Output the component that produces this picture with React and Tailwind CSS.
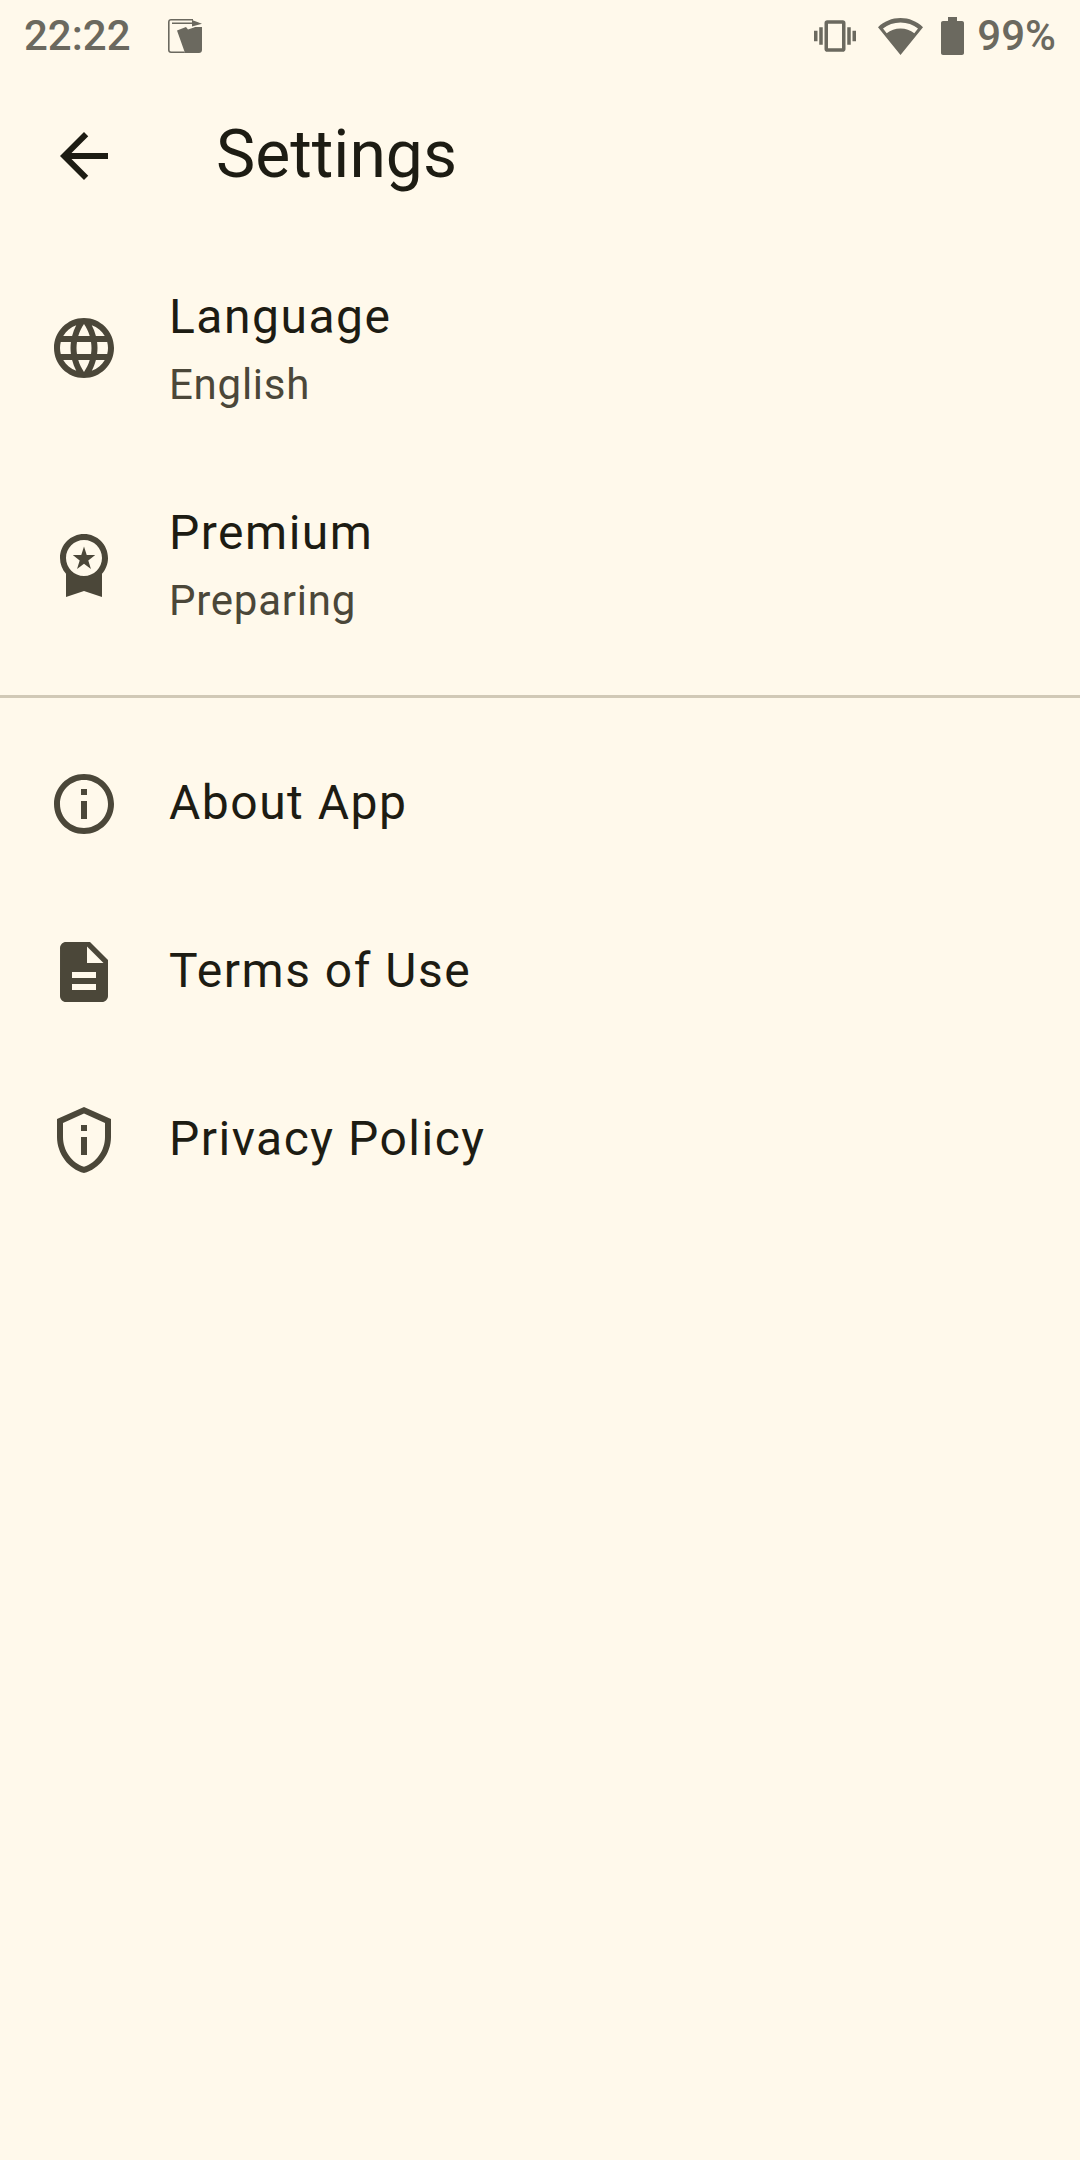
import React from 'react';

const ICONS = {
  language:
    'M11.99 2C6.47 2 2 6.48 2 12s4.47 10 9.99 10C17.52 22 22 17.52 22 12S17.52 2 11.99 2zm6.93 6h-2.95c-.32-1.25-.78-2.45-1.38-3.56 1.84.63 3.37 1.91 4.33 3.56zM12 4.04c.83 1.2 1.48 2.53 1.91 3.96h-3.82c.43-1.43 1.08-2.76 1.91-3.96zM4.26 14C4.1 13.36 4 12.69 4 12s.1-1.36.26-2h3.38c-.08.66-.14 1.32-.14 2 0 .68.06 1.34.14 2H4.26zm.82 2h2.95c.32 1.25.78 2.45 1.38 3.56-1.84-.63-3.37-1.9-4.33-3.56zm2.95-8H5.08c.96-1.66 2.49-2.93 4.33-3.56C8.81 5.55 8.35 6.75 8.03 8zM12 19.96c-.83-1.2-1.48-2.53-1.91-3.96h3.82c-.43 1.43-1.08 2.76-1.91 3.96zM14.34 14H9.66c-.09-.66-.16-1.32-.16-2 0-.68.07-1.35.16-2h4.68c.09.65.16 1.32.16 2 0 .68-.07 1.34-.16 2zm.25 5.56c.6-1.11 1.06-2.31 1.38-3.56h2.95c-.96 1.65-2.49 2.93-4.33 3.56zM16.36 14c.08-.66.14-1.32.14-2 0-.68-.06-1.34-.14-2h3.38c.16.64.26 1.31.26 2s-.1 1.36-.26 2h-3.38z',
  premium:
    'M9.68 13.69 12 11.93l2.31 1.76-.88-2.85L15.75 9h-2.84L12 6.19 11.09 9H8.25l2.31 1.84-.88 2.85zM20 10c0-4.42-3.58-8-8-8s-8 3.58-8 8c0 2.03.76 3.87 2 5.28V23l6-2 6 2v-7.72c1.24-1.41 2-3.25 2-5.28zm-8-6c3.31 0 6 2.69 6 6s-2.69 6-6 6-6-2.69-6-6 2.69-6 6-6z',
  info:
    'M11 7h2v2h-2zm0 4h2v6h-2zm1-9C6.48 2 2 6.48 2 12s4.48 10 10 10 10-4.48 10-10S17.52 2 12 2zm0 18c-4.41 0-8-3.59-8-8s3.59-8 8-8 8 3.59 8 8-3.59 8-8 8z',
  terms:
    'M14 2H6c-1.1 0-1.99.9-1.99 2L4 20c0 1.1.89 2 1.99 2H18c1.1 0 2-.9 2-2V8l-6-6zm2 16H8v-2h8v2zm0-4H8v-2h8v2zm-3-5V3.5L18.5 9H13z',
  privacy:
    'M12 1 3 5v6c0 5.55 3.84 10.74 9 12 5.16-1.26 9-6.45 9-12V5l-9-4zm7 10c0 4.52-2.98 8.69-7 9.93-4.02-1.24-7-5.41-7-9.93V6.3l7-3.11 7 3.11V11zm-8-4h2v2h-2zm0 4h2v6h-2z',
  back: 'M20 11H7.83l5.59-5.59L12 4l-8 8 8 8 1.41-1.41L7.83 13H20v-2z',
  vibration:
    'M0 15h2V9H0v6zm3 2h2V7H3v10zm19-8v6h2V9h-2zm-3 8h2V7h-2v10zM16.5 3h-9C6.67 3 6 3.67 6 4.5v15c0 .83.67 1.5 1.5 1.5h9c.83 0 1.5-.67 1.5-1.5v-15c0-.83-.67-1.5-1.5-1.5zM16 19H8V5h8v14z',
};

const Icon = ({ name, className }) => (
  <svg viewBox="0 0 24 24" fill="currentColor" className={className}>
    <path d={ICONS[name]} />
  </svg>
);

const SettingsRow = ({ icon, title, subtitle }) => (
  <div className={`flex items-center pl-12 gap-[49px] ${subtitle ? 'h-[216px]' : 'h-[168px]'}`}>
    <Icon name={icon} className="w-[72px] h-[72px] shrink-0 text-[#4b4739]" />
    <div className={`flex flex-col ${subtitle ? '' : 'mb-[3px]'}`}>
      <span className="text-[48px] leading-[72px] tracking-[1.5px] text-[#1d1c13]">{title}</span>
      {subtitle && (
        <span className="mt-[2px] text-[42px] leading-[60px] tracking-[0.75px] text-[#4b4739]">{subtitle}</span>
      )}
    </div>
  </div>
);

const StatusBar = () => (
  <div className="h-[72px] flex items-center justify-between pl-6 pr-6 text-[#6b695f] text-[42px] leading-none font-medium">
    <div className="flex items-center gap-[37px]">
      <span>22:22</span>
      <svg viewBox="0 0 34 34" className="w-[34px] h-[34px]" fill="currentColor">
        <path d="M3 0h22v1.6H3C2.2 1.6 1.6 2.2 1.6 3v28c0 .8.6 1.400 1.400 1.400h13.500L17 34H3c-1.700 0-3-1.300-3-3V3c0-1.700 1.300-3 3-3z" />
        <path d="M4 3.500h20V1l10 3.700-10 2.800V5H4z" />
        <path d="M9 11.500l9-3.500 2 2.500 6-2 1-.5h7v23c0 1.700-1.300 3-3 3H17z" />
      </svg>
    </div>
    <div className="flex items-center">
      <Icon name="vibration" className="w-[42px] h-[42px]" />
      <svg viewBox="0 0 45 37" className="w-[45px] h-[37px] ml-[22px]" fill="currentColor">
        <path d="M22.500 0C31 0 39 3.300 45 9.200L22.500 37 0 9.200C6 3.300 14 0 22.500 0zm0 4.500C16 4.500 9.800 6.700 5 10.600l3.700 4.600c3.800-3 8.700-4.700 13.800-4.700s10 1.700 13.800 4.700l3.700-4.600C35.200 6.700 29 4.500 22.500 4.500z" />
      </svg>
      <svg viewBox="0 0 23 38" className="w-[23px] h-[38px] ml-[18px]" fill="currentColor">
        <path d="M7 0h9v4h5c1.100 0 2 .9 2 2v30c0 1.100-.9 2-2 2H2c-1.100 0-2-.9-2-2V6c0-1.100.9-2 2-2h5z" />
      </svg>
      <span className="ml-[13px]">99%</span>
    </div>
  </div>
);

const App = () => (
  <div className="w-[1080px] h-[2160px] bg-[#fff9eb] font-['Roboto',sans-serif]">
    <StatusBar />
    <div className="h-[168px] flex items-center pl-12">
      <Icon name="back" className="w-[72px] h-[72px] text-[#1d1c13]" />
      <span className="ml-[96px] mb-[3px] text-[66px] leading-none text-[#1d1c13]">Settings</span>
    </div>
    <SettingsRow icon="language" title="Language" subtitle="English" />
    <SettingsRow icon="premium" title="Premium" subtitle="Preparing" />
    <div className="mt-[23px] mb-[22px] h-[3px] bg-[#d1c9b6]" />
    <SettingsRow icon="info" title="About App" />
    <SettingsRow icon="terms" title="Terms of Use" />
    <SettingsRow icon="privacy" title="Privacy Policy" />
  </div>
);

export default App;
